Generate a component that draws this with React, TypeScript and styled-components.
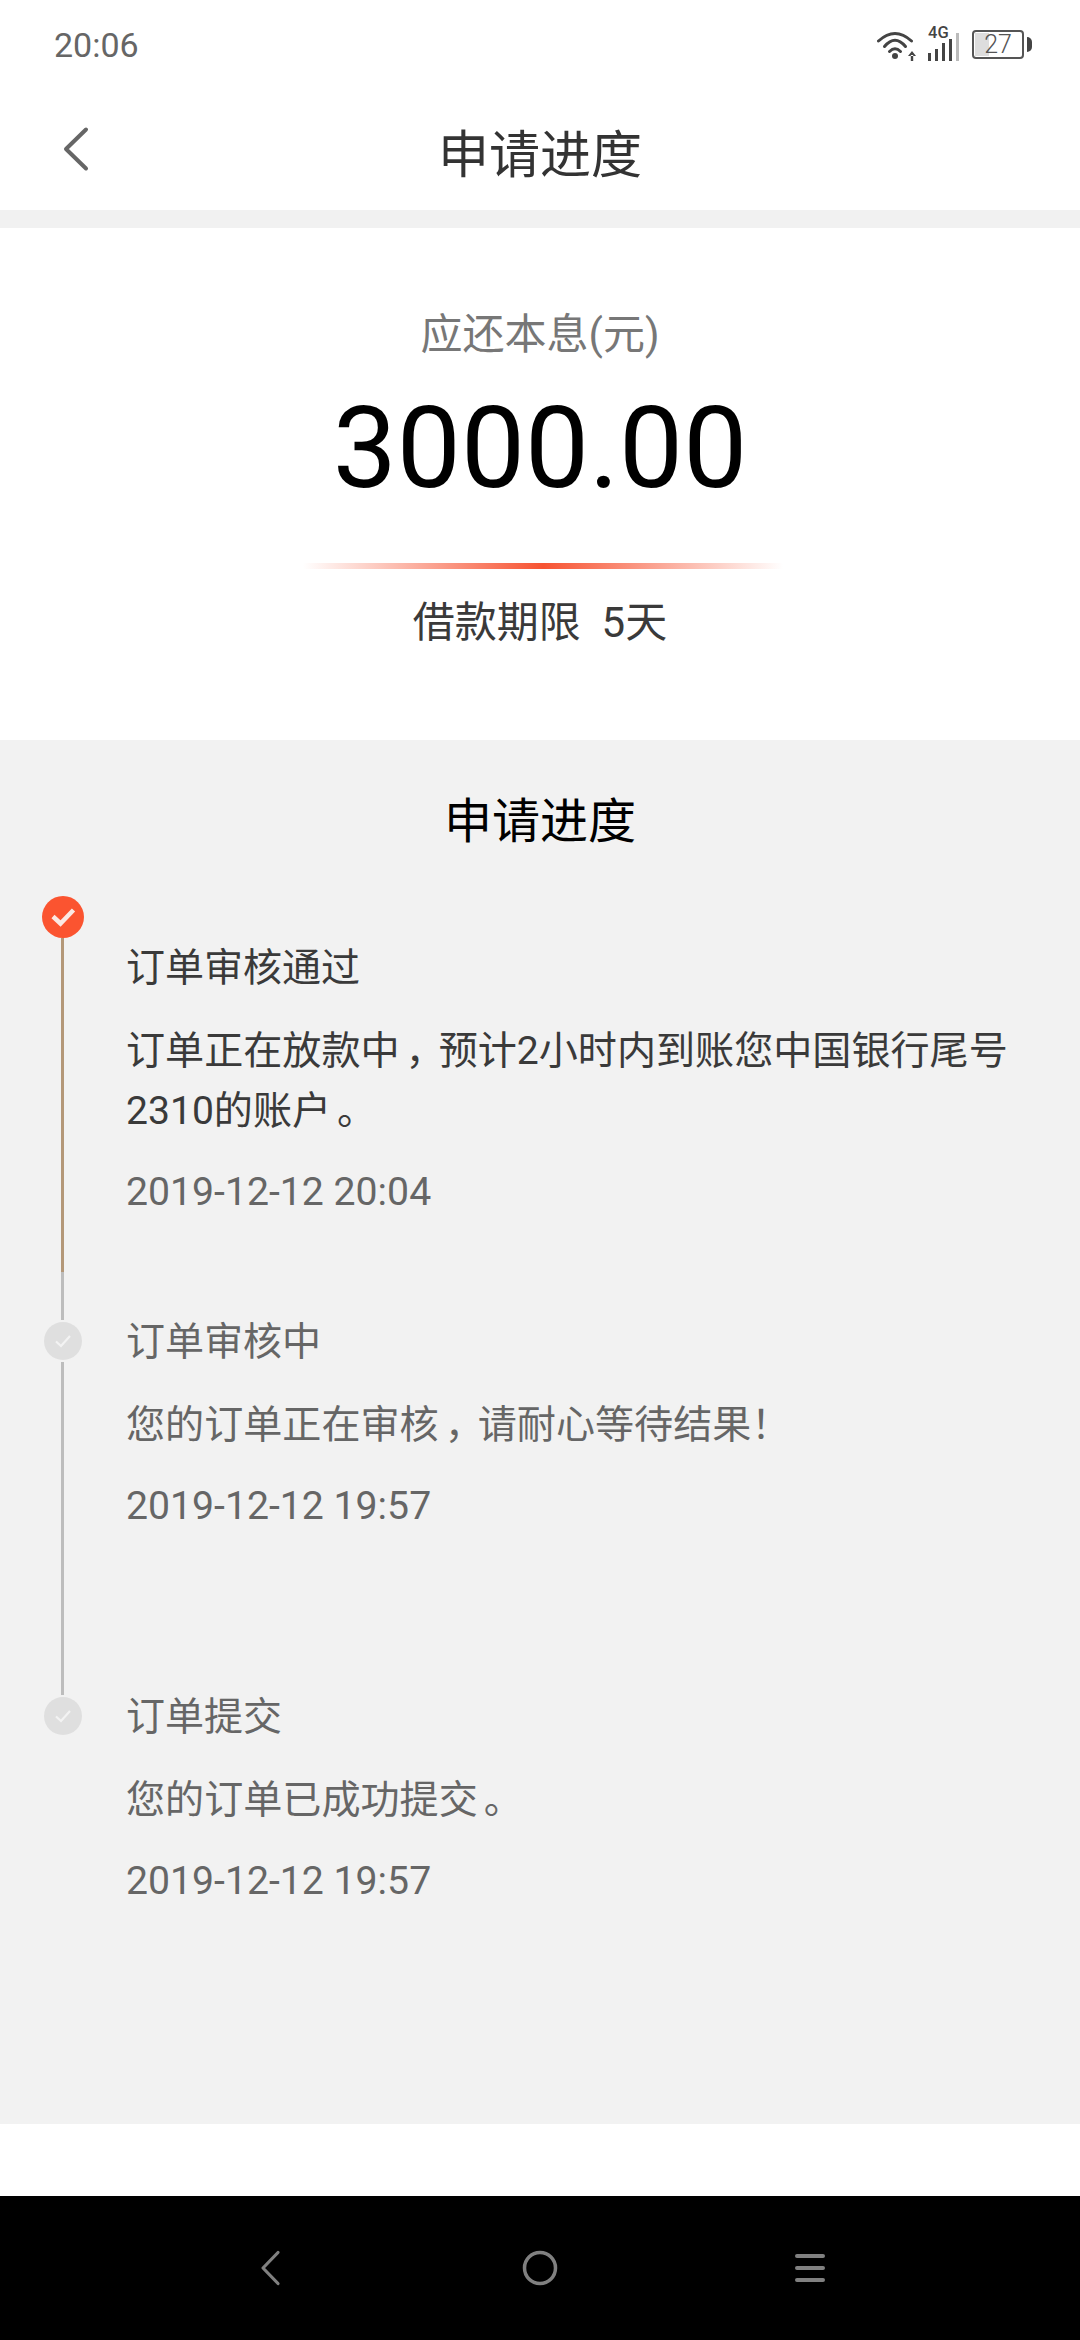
import styled, {createGlobalStyle} from "styled-components";

const GlobalStyle = createGlobalStyle`
    html, body {
        margin: 0;
        padding: 0;
        background-color: #fff;
    }
    * {
        box-sizing: border-box;
    }
`;

const Wrapper = styled.div`
    width: 1080px;
    height: 2340px;
    display: flex;
    flex-direction: column;
    overflow: hidden;
    background-color: #fff;
    font-family: Roboto, "Noto Sans CJK SC", sans-serif;
`;

const StatusBar = styled.div`
    height: 90px;
    padding: 0 48px 0 54px;
    display: flex;
    align-items: center;
    justify-content: space-between;
`;

const Clock = styled.span`
    font-size: 34px;
    color: #666;
    margin-top: -1px;
`;

const StatusIcons = styled.div`
    display: flex;
    align-items: flex-end;
    gap: 12px;
    height: 38px;
    margin-top: -6px;
`;

const BatteryBox = styled.div`
    position: relative;
    width: 52px;
    height: 29px;
    margin-right: 8px;
    margin-bottom: 2px;
    border: 2px solid #555;
    border-radius: 4px;
    display: flex;
    align-items: center;
    justify-content: center;
    font-size: 25px;
    font-weight: 300;
    color: #555;

    &::before {
        content: "";
        position: absolute;
        left: 1px;
        top: 1px;
        bottom: 1px;
        width: 14px;
        background-color: #ddd;
    }

    &::after {
        content: "";
        position: absolute;
        right: -10px;
        top: 5px;
        width: 5px;
        height: 15px;
        border-radius: 0 7px 7px 0;
        background-color: #444;
    }
`;

const BatteryText = styled.span`
    position: relative;
    line-height: 1;
`;

const NavBar = styled.div`
    position: relative;
    height: 120px;
    display: flex;
    align-items: center;
    justify-content: center;
`;

const BackButton = styled.div`
    position: absolute;
    left: 62px;
    top: 36px;
    display: flex;
`;

const NavTitle = styled.h1`
    margin: 2px 0 0;
    font-size: 51px;
    font-weight: 400;
    color: #333;
`;

const Divider = styled.div`
    height: 18px;
    background-color: #f1f1f1;
`;

const Summary = styled.section`
    height: 512px;
    display: flex;
    flex-direction: column;
    align-items: center;
    padding-top: 79px;
`;

const AmountLabel = styled.div`
    font-size: 42px;
    line-height: 56px;
    color: #777;
`;

const Amount = styled.div`
    font-size: 114px;
    line-height: 132px;
    color: #000;
    margin-top: 19px;
`;

const GradientRule = styled.div`
    width: 480px;
    height: 6px;
    margin-top: 49px;
    margin-left: 6px;
    background: linear-gradient(90deg, rgba(247, 83, 50, 0), #f75332 50%, rgba(247, 83, 50, 0));
`;

const Term = styled.div`
    font-size: 42px;
    line-height: 56px;
    color: #3a3a3a;
    margin-top: 26px;
    white-space: pre;
`;

const Progress = styled.section`
    height: 1384px;
    background-color: #f2f2f2;
    display: flex;
    flex-direction: column;
`;

const ProgressTitle = styled.h2`
    margin: 0;
    height: 156px;
    padding-top: 50px;
    text-align: center;
    font-size: 48px;
    line-height: 64px;
    font-weight: 400;
    color: #000;
`;

const Step = styled.div<{$height: number}>`
    height: ${props => props.$height}px;
    display: flex;
`;

const Rail = styled.div`
    width: 126px;
    flex-shrink: 0;
    display: flex;
    flex-direction: column;
    align-items: center;
`;

const Dot = styled.div<{$active?: boolean}>`
    width: ${props => props.$active ? 42 : 38}px;
    height: ${props => props.$active ? 42 : 38}px;
    margin-top: ${props => props.$active ? 0 : 2}px;
    border-radius: 50%;
    flex-shrink: 0;
    display: flex;
    align-items: center;
    justify-content: center;
    background-color: ${props => props.$active ? "#fb5430" : "#dfdfdf"};
`;

const Line = styled.div<{$done?: boolean}>`
    width: 3px;
    flex: 1;
    margin-top: ${props => props.$done ? 0 : 2}px;
    margin-right: 2px;
    background-color: #bdbdbd;
    background-image: ${props => props.$done ? "linear-gradient(#b49878, #b49878)" : "none"};
    background-repeat: no-repeat;
    background-size: 100% 334px;
`;

const StepBody = styled.div<{$offset: number}>`
    flex: 1;
    padding-top: ${props => props.$offset}px;
`;

const StepTitle = styled.div<{$active?: boolean}>`
    font-size: 39px;
    line-height: 40px;
    color: ${props => props.$active ? "#3a3a3a" : "#666"};
`;

const StepText = styled.div<{$active?: boolean}>`
    font-size: 39.1px;
    line-height: 60px;
    margin-top: 33px;
    color: ${props => props.$active ? "#3a3a3a" : "#666"};
`;

const StepLine = styled.div`
    white-space: nowrap;
`;

// 참고 화면의 폰트는 문장부호가 글자칸 가운데 쪽에 있다
const Punct = styled.span`
    margin-left: 6px;
    letter-spacing: -6px;
`;

const StepTime = styled.div`
    font-size: 39.2px;
    line-height: 54px;
    margin-top: 24px;
    color: #666;
`;

const BottomGap = styled.div`
    flex: 1;
    background-color: #fff;
`;

const SoftKeys = styled.div`
    height: 144px;
    background-color: #000;
    display: flex;
    align-items: center;
    justify-content: center;
    gap: 210px;
`;

const SoftKey = styled.div`
    width: 60px;
    display: flex;
    justify-content: center;
`;

const steps = [
  {
    title: "订单审核通过",
    lines: ["订单正在放款中，预计2小时内到账您中国银行尾号", "2310的账户。"],
    time: "2019-12-12 20:04",
    active: true,
    height: 424,
    offset: 52
  },
  {
    title: "订单审核中",
    lines: ["您的订单正在审核，请耐心等待结果！"],
    time: "2019-12-12 19:57",
    active: false,
    height: 375,
    offset: 2
  },
  {
    title: "订单提交",
    lines: ["您的订单已成功提交。"],
    time: "2019-12-12 19:57",
    active: false,
    height: 300,
    offset: 2
  }
];

function Check({active}: {active: boolean}) {
  return active ? (
    <svg width="26" height="20" viewBox="0 0 26 20" fill="none">
      <path d="M3 9.500l7.500 7L23.500 3" stroke="#fbe9e4" strokeWidth="4.500" />
    </svg>
  ) : (
    <svg width="20" height="16" viewBox="0 0 20 16" fill="none">
      <path d="M3 8.500l5 4.500L17 3" stroke="#f3f3f3" strokeWidth="2.200" />
    </svg>
  );
}

function withPunct(text: string) {
  return text.split(/([，。])/).map((part, i) => (
    part === "，" || part === "。" ? <Punct key={i}>{part}</Punct> : part
  ));
}

export default function App() {
  return (
    <Wrapper>
      <GlobalStyle />
      <StatusBar>
        <Clock>20:06</Clock>
        <StatusIcons>
          <svg width="39" height="38" viewBox="0 0 39 38" fill="none">
            <path d="M1.500 18Q18 3 34.500 18" stroke="#444" strokeWidth="3" strokeLinecap="round" />
            <path d="M7.500 23.500Q18 11 28.500 23.500" stroke="#444" strokeWidth="3" strokeLinecap="round" />
            <path d="M12.500 28.500Q18 23 23.500 28.500" stroke="#444" strokeWidth="3" strokeLinecap="round" />
            <circle cx="18" cy="33" r="3" fill="#444" />
            <path d="M35 28l-4 5h8zM33.800 32h2.400v6h-2.400z" fill="#444" />
          </svg>
          <svg width="32" height="38" viewBox="0 0 32 38" fill="none">
            <text x="0" y="15" fontSize="16.500" fontFamily="Roboto, sans-serif" fontWeight="500" fill="#444">4G</text>
            <rect x="0" y="30" width="3" height="8" fill="#444" />
            <rect x="7" y="26" width="3" height="12" fill="#444" />
            <rect x="14" y="20" width="3" height="18" fill="#444" />
            <rect x="21" y="16" width="3" height="22" fill="#444" />
            <rect x="28" y="10" width="3" height="28" fill="#bbb" />
          </svg>
          <BatteryBox>
            <BatteryText>27</BatteryText>
          </BatteryBox>
        </StatusIcons>
      </StatusBar>
      <NavBar>
        <BackButton>
          <svg width="30" height="48" viewBox="0 0 30 48" fill="none">
            <path d="M24 3.500L4 23l20 19.500" stroke="#666" strokeWidth="4" strokeLinecap="round" strokeLinejoin="round" />
          </svg>
        </BackButton>
        <NavTitle>申请进度</NavTitle>
      </NavBar>
      <Divider />
      <Summary>
        <AmountLabel>应还本息(元)</AmountLabel>
        <Amount>3000.00</Amount>
        <GradientRule />
        <Term>借款期限  5天</Term>
      </Summary>
      <Progress>
        <ProgressTitle>申请进度</ProgressTitle>
        {
          steps.map((step, i) => (
            <Step key={step.title} $height={step.height}>
              <Rail>
                <Dot $active={step.active}>
                  <Check active={step.active} />
                </Dot>
                { i < steps.length - 1 && <Line $done={step.active} /> }
              </Rail>
              <StepBody $offset={step.offset}>
                <StepTitle $active={step.active}>{step.title}</StepTitle>
                <StepText $active={step.active}>
                  { step.lines.map(line => <StepLine key={line}>{withPunct(line)}</StepLine>) }
                </StepText>
                <StepTime>{step.time}</StepTime>
              </StepBody>
            </Step>
          ))
        }
      </Progress>
      <BottomGap />
      <SoftKeys>
        <SoftKey>
          <svg width="22" height="36" viewBox="0 0 22 36" fill="none">
            <path d="M19 2.500L4 18l15 15.500" stroke="#808080" strokeWidth="3.200" strokeLinecap="round" strokeLinejoin="round" />
          </svg>
        </SoftKey>
        <SoftKey>
          <svg width="36" height="36" viewBox="0 0 36 36" fill="none">
            <circle cx="18" cy="18" r="15.500" stroke="#808080" strokeWidth="3.500" />
          </svg>
        </SoftKey>
        <SoftKey>
          <svg width="30" height="30" viewBox="0 0 30 30" fill="none">
            <path d="M2 3h26M2 15h26M2 27h26" stroke="#808080" strokeWidth="4" strokeLinecap="round" />
          </svg>
        </SoftKey>
      </SoftKeys>
    </Wrapper>
  );
}
